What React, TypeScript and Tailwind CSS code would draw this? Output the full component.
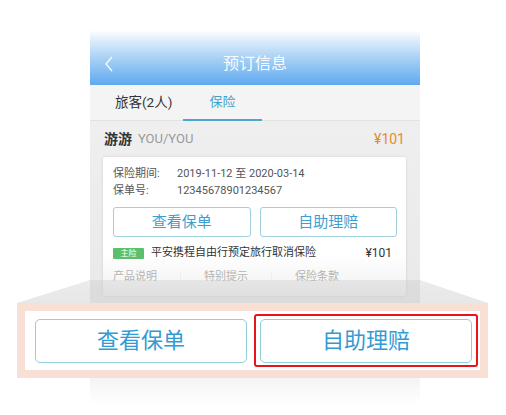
import React from "react";

const font = { fontFamily: 'Roboto, "Noto Sans CJK SC", sans-serif' };

function SmallButton({ label }: { label: string }) {
    return (
        <div className="h-[30px] flex-1 flex items-center justify-center rounded-[3px] border border-[#9fd0de] bg-white text-[15px] text-[#3a9fd2]">
            {label}
        </div>
    );
}

function PhoneScreen() {
    return (
        <div className="ml-[90px] mt-[30px] w-[330px] h-[375px] flex flex-col">
            {/* header */}
            <div className="h-[55px] flex items-center relative bg-[linear-gradient(to_bottom,#ffffff_0%,#d8eafb_22%,#a2cef5_55%,#5ea9ef_100%)]">
                <svg className="ml-[14px] mt-[12px]" width="10" height="16" viewBox="0 0 10 16">
                    <polyline points="8,1 2,8 8,15" fill="none" stroke="#f4f9ff" strokeWidth="1.4" />
                </svg>
                <div className="absolute left-0 right-0 top-[22px] text-center text-[16px] text-white/95">预订信息</div>
            </div>

            {/* tabs */}
            <div className="h-[36px] flex items-stretch bg-[#f4f4f4] border-b border-[#e2e2e2]">
                <div className="w-[93px] pl-[25px] flex items-center text-[13.5px] text-[#333]">旅客(2人)</div>
                <div className="w-[79px] flex items-center justify-center text-[13px] text-[#3fa3cb] border-b-2 border-[#4da6cc] -mb-px">保险</div>
            </div>

            {/* content */}
            <div className="flex-1 flex flex-col bg-[linear-gradient(to_bottom,#efefef_0%,#eaeaea_55%,#e2e2e2_70%,#f1f1f1_88%,#ffffff_100%)]">
                <div className="h-[36px] flex items-center pl-[14px] pr-[15px]">
                    <span className="text-[14px] font-semibold text-[#333]">游游</span>
                    <span className="ml-[6px] text-[13px] text-[#9a9a9a]">YOU/YOU</span>
                    <span className="ml-auto text-[14px] text-[#e8892f]">¥101</span>
                </div>
                <div className="ml-[13px] mr-[14px] rounded-[3px] bg-[linear-gradient(to_bottom,#ffffff_0%,#ffffff_70%,#f0f0f0_100%)] shadow-[0_0_3px_rgba(0,0,0,0.12)] pl-[10px] pr-[9px] pt-[8px] pb-[11px] flex flex-col">
                    <div className="flex text-[11px] leading-[17px] text-[#555]">
                        <span className="w-[64px]">保险期间:</span>
                        <span>2019-11-12 至 2020-03-14</span>
                    </div>
                    <div className="flex text-[11px] leading-[17px] text-[#555]">
                        <span className="w-[64px]">保单号:</span>
                        <span>12345678901234567</span>
                    </div>
                    <div className="mt-[8px] flex gap-[9px]">
                        <SmallButton label="查看保单" />
                        <SmallButton label="自助理赔" />
                    </div>
                    <div className="mt-[8px] h-[16px] flex items-center">
                        <span className="w-[31px] h-[11px] rounded-[1px] bg-[#5cbf6b] text-white text-[8px] leading-[11px] text-center">主险</span>
                        <span className="ml-[7px] text-[11px] text-[#333]">平安携程自由行预定旅行取消保险</span>
                        <span className="ml-auto mr-[5px] text-[12px] text-[#333]">¥101</span>
                    </div>
                    <div className="mt-[8px] h-[16px] flex items-center text-[11px] text-[#b4b4b4]">
                        <span className="w-[67px]">产品说明</span>
                        <span className="w-px h-[12px] bg-[#eeeeee]"></span>
                        <span className="ml-[23px] w-[67px]">特别提示</span>
                        <span className="w-px h-[12px] bg-[#eeeeee]"></span>
                        <span className="ml-[23px]">保险条款</span>
                    </div>
                </div>
            </div>
        </div>
    );
}

function BigButton({ label }: { label: string }) {
    return (
        <div className="w-[212px] h-[44px] flex items-center justify-center rounded-[5px] border-[1.5px] border-[#92cdda] bg-white text-[22px] text-[#339bd3]">
            {label}
        </div>
    );
}

export default function App() {
    return (
        <div className="relative w-[506px] h-[415px] bg-white overflow-hidden" style={font}>
            <PhoneScreen />

            {/* projection from the screen to the zoomed bar */}
            <svg className="absolute left-0 top-[278px]" width="506" height="26" viewBox="0 0 506 26">
                <defs>
                    <linearGradient id="proj" x1="0" y1="0" x2="0" y2="1">
                        <stop offset="0" stopColor="#c8c8c8" stopOpacity="0.35" />
                        <stop offset="1" stopColor="#d4d4d4" stopOpacity="0.55" />
                    </linearGradient>
                </defs>
                <polygon points="90,2 420,2 488,25 17,25" fill="url(#proj)" />
            </svg>

            {/* zoomed action bar */}
            <div className="absolute left-[17px] top-[303px] w-[471px] h-[75px] border-[8px] border-[#f8e1d4] bg-white flex items-center pl-[10px]">
                <BigButton label="查看保单" />
                <div className="ml-[7px] w-[224px] h-[53px] rounded-[3px] border-2 border-[#e8141c] flex items-center justify-center">
                    <BigButton label="自助理赔" />
                </div>
            </div>
        </div>
    );
}
